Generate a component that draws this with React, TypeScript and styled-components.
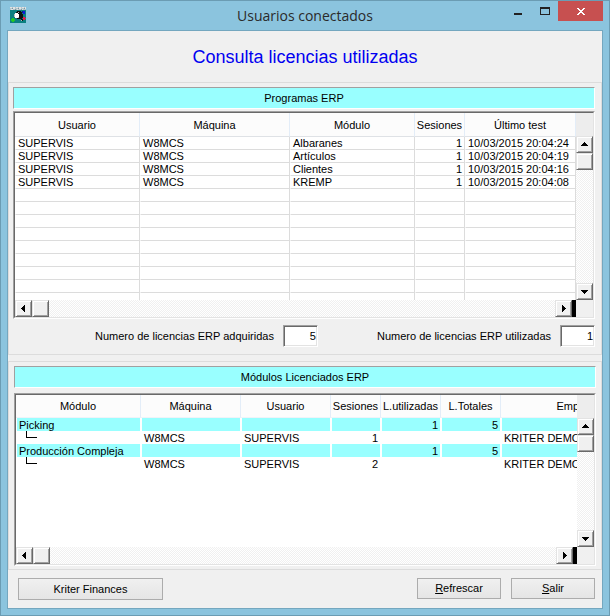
import React from "react";
import styled, { createGlobalStyle, css } from "styled-components";

const GlobalStyle = createGlobalStyle`
  *, *::before, *::after { box-sizing: border-box; }
  body {
    margin: 0;
    background: #8bc4de;
    color: #000;
    font: 11px/13px "Liberation Sans", Arial, sans-serif;
  }
  button, input { font: inherit; color: inherit; margin: 0; }
`;

/* ---------- window frame ---------- */

const Window = styled.main`
  display: flex;
  flex-direction: column;
  padding: 0 6px 6px;
  border: 1px solid #6b9cb3;
  background: #8bc4de;
`;

const TitleBar = styled.header`
  display: grid;
  grid-template-columns: 99px 1fr 99px;
  height: 29px;
`;

const AppIcon = styled.svg`
  margin: 6px 0 0 3px;
`;

const WindowTitle = styled.h1`
  margin: 0;
  text-align: center;
  font: 14px/30px "Open Sans", "Noto Sans", sans-serif;
  color: #2a2a2a;
`;

const WindowButtons = styled.div`
  display: flex;
  height: 20px;
`;

const CaptionButton = styled.button<{ $close?: boolean }>`
  display: flex;
  align-items: center;
  justify-content: center;
  width: ${(p) => (p.$close ? 45 : 27)}px;
  padding: 0;
  border: 0;
  background: ${(p) => (p.$close ? "#c75050" : "transparent")};
`;

const Client = styled.div`
  border: 1px solid #74a7bf;
  background: #f0f0f0;
`;

const Heading = styled.h2`
  margin: 0;
  height: 51px;
  text-align: center;
  font: 18px/52px "Liberation Sans", Arial, sans-serif;
  color: #0000f0;
`;

/* ---------- panels ---------- */

const Panel = styled.section<{ $second?: boolean }>`
  display: flex;
  flex-direction: column;
  gap: ${(p) => (p.$second ? 5 : 2)}px;
  padding: ${(p) => (p.$second ? "4px 5px 3px 5px" : "4px 6px 7px 4px")};
  margin-bottom: ${(p) => (p.$second ? 8 : 6)}px;
  border: 1px solid #dcdcdc;
`;

const Banner = styled.h3`
  margin: 0;
  height: 22px;
  border: 1px solid;
  border-color: #a0a0a0 #fff #fff #a0a0a0;
  background: #99ffff;
  text-align: center;
  font-size: 11px;
  font-weight: 400;
  line-height: 20px;
`;

const sunken = css`
  border: 1px solid;
  border-color: #a0a0a0 #fff #fff #a0a0a0;
`;

const GridFrame = styled.div`
  ${sunken}
`;

const GridBody = styled.div<{ $height: number }>`
  display: grid;
  grid-template-columns: minmax(0, 1fr) 17px;
  grid-template-rows: ${(p) => p.$height}px 17px;
  border: 1px solid;
  border-color: #696969 #e3e3e3 #e3e3e3 #696969;
  background: #fff;
`;

const Viewport = styled.div`
  overflow: hidden;
`;

const Table = styled.table`
  width: 100%;
  table-layout: fixed;
  border-collapse: separate;
  border-spacing: 0;
`;

const Col = styled.col<{ $w?: number }>`
  width: ${(p) => (p.$w ? `${p.$w}px` : "auto")};
`;

const HeadCell = styled.th<{ $ruled?: boolean }>`
  height: ${(p) => (p.$ruled ? 24 : 23)}px;
  padding: 1px 0 0;
  border-right: 1px solid #e3edf8;
  border-bottom: 1px solid ${(p) => (p.$ruled ? "#dfe2e6" : "#f0f3f8")};
  background: #fcfcfc;
  font-weight: 400;
  white-space: nowrap;
`;

const Cell = styled.td<{ $ruled?: boolean; $filled?: boolean; $right?: boolean }>`
  height: 13px;
  padding: 0 2px;
  overflow: hidden;
  border: 0 solid #fff;
  border-width: 0 1px;
  background: ${(p) => (p.$filled ? "#99ffff" : "#fff")};
  background-clip: padding-box;
  line-height: 12px;
  text-align: ${(p) => (p.$right ? "right" : "left")};
  white-space: nowrap;
  ${(p) =>
    p.$ruled &&
    css`
      border-right-color: #dcdcdc;
      border-bottom: 1px solid #dcdcdc;
    `}
`;

const Branch = styled.svg`
  display: block;
  margin-left: 7px;
`;

/* ---------- scroll bars ---------- */

const ScrollColumn = styled.div<{ $head: number }>`
  display: flex;
  flex-direction: column;
  padding-top: ${(p) => p.$head}px;
  background: #ededed;
`;

const ScrollRow = styled.div`
  display: flex;
`;

const raised = css`
  border: 1px solid;
  border-color: #e3e3e3 #696969 #696969 #e3e3e3;
  box-shadow: inset 1px 1px #fff, inset -1px -1px #a0a0a0;
  background: #f0f0f0;
`;

const ScrollButton = styled.button`
  display: flex;
  flex: none;
  align-items: center;
  justify-content: center;
  width: 17px;
  height: 17px;
  padding: 0;
  ${raised}
`;

const Thumb = styled.div`
  flex: none;
  width: 17px;
  height: 17px;
  ${raised}
`;

const Track = styled.div`
  flex: 1;
  background: repeating-conic-gradient(#fff 0 25%, #f0f0f0 0 50%) 0 0 / 2px 2px;
`;

const SplitHandle = styled.div`
  width: 4px;
  background: #000;
`;

const Corner = styled.div`
  background: #f0f0f0;
`;

/* ---------- totals and actions ---------- */

const Totals = styled.div`
  display: flex;
  justify-content: flex-end;
  gap: 59px;
  margin-top: 4px;
`;

const Total = styled.label`
  display: flex;
  align-items: center;
  gap: 9px;
`;

const TotalInput = styled.input`
  width: 35px;
  height: 22px;
  padding: 0 1px;
  ${sunken}
  box-shadow: inset 1px 1px #696969, inset -1px -1px #e3e3e3;
  background: #fff;
  text-align: right;
  outline: none;
`;

const Actions = styled.footer`
  display: flex;
  gap: 10px;
  padding: 0 7px 8px 10px;
`;

const ActionButton = styled.button<{ $wide?: boolean }>`
  width: ${(p) => (p.$wide ? 145 : 84)}px;
  height: ${(p) => (p.$wide ? 22 : 21)}px;
  margin-right: ${(p) => (p.$wide ? "auto" : 0)};
  padding: 0;
  border: 1px solid #acacac;
  background: linear-gradient(#f0f0f0, #e5e5e5);
`;

type Direction = "up" | "down" | "left" | "right";

const arrows: Record<Direction, string> = {
  up: "M4 2h1v1h1v1h1v1h1v1H1V5h1V4h1V3h1z",
  down: "M1 3h7v1H7v1H6v1H5v1H4V6H3V5H2V4H1z",
  left: "M5 1h1v7H5V7H4V6H3V5H2V4h1V3h1V2h1z",
  right: "M3 1h1v1h1v1h1v1h1v1H6v1H5v1H4v1H3z",
};

const arrowNames: Record<Direction, string> = {
  up: "Arriba",
  down: "Abajo",
  left: "Izquierda",
  right: "Derecha",
};

function Arrow({ to }: { to: Direction }) {
  return (
    <ScrollButton type="button" aria-label={arrowNames[to]}>
      <svg width="9" height="9" viewBox="0 0 9 9" shapeRendering="crispEdges">
        <path d={arrows[to]} />
      </svg>
    </ScrollButton>
  );
}

function ScrollGrid(props: { height: number; head: number; children: React.ReactNode }) {
  return (
    <GridFrame>
      <GridBody $height={props.height}>
        <Viewport>{props.children}</Viewport>
        <ScrollColumn $head={props.head}>
          <Arrow to="up" />
          <Thumb />
          <Track />
          <Arrow to="down" />
        </ScrollColumn>
        <ScrollRow>
          <Arrow to="left" />
          <Thumb />
          <Track />
          <Arrow to="right" />
          <SplitHandle />
        </ScrollRow>
        <Corner />
      </GridBody>
    </GridFrame>
  );
}

const programColumns = [
  { name: "Usuario", width: 125 },
  { name: "Máquina", width: 150 },
  { name: "Módulo", width: 125 },
  { name: "Sesiones", width: 50 },
  { name: "Último test", width: undefined },
];

const programs = [
  ["SUPERVIS", "W8MCS", "Albaranes", "1", "10/03/2015 20:04:24"],
  ["SUPERVIS", "W8MCS", "Artículos", "1", "10/03/2015 20:04:19"],
  ["SUPERVIS", "W8MCS", "Clientes", "1", "10/03/2015 20:04:16"],
  ["SUPERVIS", "W8MCS", "KREMP", "1", "10/03/2015 20:04:08"],
];

const emptyPrograms = Array.from({ length: 9 }, () => ["", "", "", "", ""]);

const moduleColumns = [
  { name: "Módulo", width: 125 },
  { name: "Máquina", width: 100 },
  { name: "Usuario", width: 90 },
  { name: "Sesiones", width: 50 },
  { name: "L.utilizadas", width: 60 },
  { name: "L.Totales", width: 60 },
  { name: "Empresa", width: 156 },
];

const modules = [
  { group: true, cells: ["Picking", "", "", "", "1", "5", ""] },
  { group: false, cells: ["", "W8MCS", "SUPERVIS", "1", "", "", "KRITER DEMO"] },
  { group: true, cells: ["Producción Compleja", "", "", "", "1", "5", ""] },
  { group: false, cells: ["", "W8MCS", "SUPERVIS", "2", "", "", "KRITER DEMO"] },
];

function KriterIcon() {
  return (
    <AppIcon width="16" height="16" viewBox="0 0 16 16" shapeRendering="crispEdges" aria-hidden="true">
      <rect width="16" height="16" fill="#0b7f80" />
      <rect width="16" height="3" fill="#b4c6cc" />
      <path fill="#e2e2e2" d="M0 0h2v1H0zM3 0h2v2H3zM6 0h2v1H6zM9 0h2v2H9zM12 0h2v1h-2zM15 0h1v2h-1zM1 2h2v1H1zM7 2h1v1H7zM12 2h1v1h-1z" />
      <path fill="#7b98a0" d="M2 1h1v1H2zM5 2h1v1H5zM8 1h1v1H8zM11 2h1v1h-1zM14 1h1v1h-1z" />
      <path fill="#101010" d="M7 4h4v1h1v2h1v4h-1v1h1v2h-1v-1h-1v-1H7v-1H6V5h1z" />
      <path fill="#fff" d="M5 6h3v1h1v3H8v1H5v-1H4V7h1z" />
      <path fill="#b9bdbd" d="M8 5h1v1H8zM8 10h1v1H8zM4 7h1v3H4zM11 13h1v1h-1z" />
      <rect x="13" y="4" width="2" height="3" fill="#1019d8" />
      <rect x="12" y="4" width="1" height="2" fill="#071b83" />
      <path fill="#e8194a" d="M13 10h2v1h1v1h-1v1h-2z" />
      <path fill="#23c727" d="M2 11h2v1h1v2H4v1H2v-1H1v-2h1z" />
    </AppIcon>
  );
}

export default function App() {
  return (
    <>
      <GlobalStyle />
      <Window>
        <TitleBar>
          <KriterIcon />
          <WindowTitle>Usuarios conectados</WindowTitle>
          <WindowButtons>
            <CaptionButton type="button" aria-label="Minimizar">
              <svg width="9" height="8" shapeRendering="crispEdges">
                <rect x="1" y="6" width="8" height="2" fill="#222" />
              </svg>
            </CaptionButton>
            <CaptionButton type="button" aria-label="Maximizar">
              <svg width="11" height="8" shapeRendering="crispEdges">
                <path d="M1 0h10v8H1zM2 2v5h8V2z" fill="#222" fillRule="evenodd" />
              </svg>
            </CaptionButton>
            <CaptionButton type="button" aria-label="Cerrar" $close>
              <svg width="9" height="8" viewBox="-1 -1 9 8" shapeRendering="crispEdges">
                <path
                  d="M0 0h2v1h1v1h2V1h1V0h2v1H7v1H6v1H5v1h1v1h1v1h1v1H6V6H5V5H3v1H2v1H0V6h1V5h1V4h1V3H2V2H1V1H0z"
                  fill="#fff"
                />
              </svg>
            </CaptionButton>
          </WindowButtons>
        </TitleBar>
        <Client>
          <Heading>Consulta licencias utilizadas</Heading>
          <Panel>
            <Banner>Programas ERP</Banner>
            <ScrollGrid height={187} head={23}>
              <Table>
                <colgroup>
                  {programColumns.map((c) => (
                    <Col key={c.name} $w={c.width} />
                  ))}
                </colgroup>
                <thead>
                  <tr>
                    {programColumns.map((c) => (
                      <HeadCell key={c.name} scope="col" $ruled>
                        {c.name}
                      </HeadCell>
                    ))}
                  </tr>
                </thead>
                <tbody>
                  {[...programs, ...emptyPrograms].map((row, r) => (
                    <tr key={r}>
                      {row.map((text, c) => (
                        <Cell key={c} $ruled $right={c === 3}>
                          {text}
                        </Cell>
                      ))}
                    </tr>
                  ))}
                </tbody>
              </Table>
            </ScrollGrid>
            <Totals>
              <Total>
                Numero de licencias ERP adquiridas
                <TotalInput defaultValue="5" />
              </Total>
              <Total>
                Numero de licencias ERP utilizadas
                <TotalInput defaultValue="1" />
              </Total>
            </Totals>
          </Panel>
          <Panel $second>
            <Banner>Módulos Licenciados ERP</Banner>
            <ScrollGrid height={152} head={23}>
              <Table>
                <colgroup>
                  {moduleColumns.map((c) => (
                    <Col key={c.name} $w={c.width} />
                  ))}
                </colgroup>
                <thead>
                  <tr>
                    {moduleColumns.map((c) => (
                      <HeadCell key={c.name} scope="col">
                        {c.name}
                      </HeadCell>
                    ))}
                  </tr>
                </thead>
                <tbody>
                  {modules.map((row, r) => (
                    <tr key={r}>
                      {row.cells.map((text, c) => (
                        <Cell key={c} $filled={row.group} $right={c > 2 && c < 6}>
                          {c === 0 && !row.group ? (
                            <Branch width="11" height="13" shapeRendering="crispEdges" aria-hidden="true">
                              <path d="M0 0h1v6h10v1H0z" />
                            </Branch>
                          ) : (
                            text
                          )}
                        </Cell>
                      ))}
                    </tr>
                  ))}
                </tbody>
              </Table>
            </ScrollGrid>
          </Panel>
          <Actions>
            <ActionButton type="button" $wide>
              Kriter Finances
            </ActionButton>
            <ActionButton type="button">
              <u>R</u>efrescar
            </ActionButton>
            <ActionButton type="button">
              <u>S</u>alir
            </ActionButton>
          </Actions>
        </Client>
      </Window>
    </>
  );
}
